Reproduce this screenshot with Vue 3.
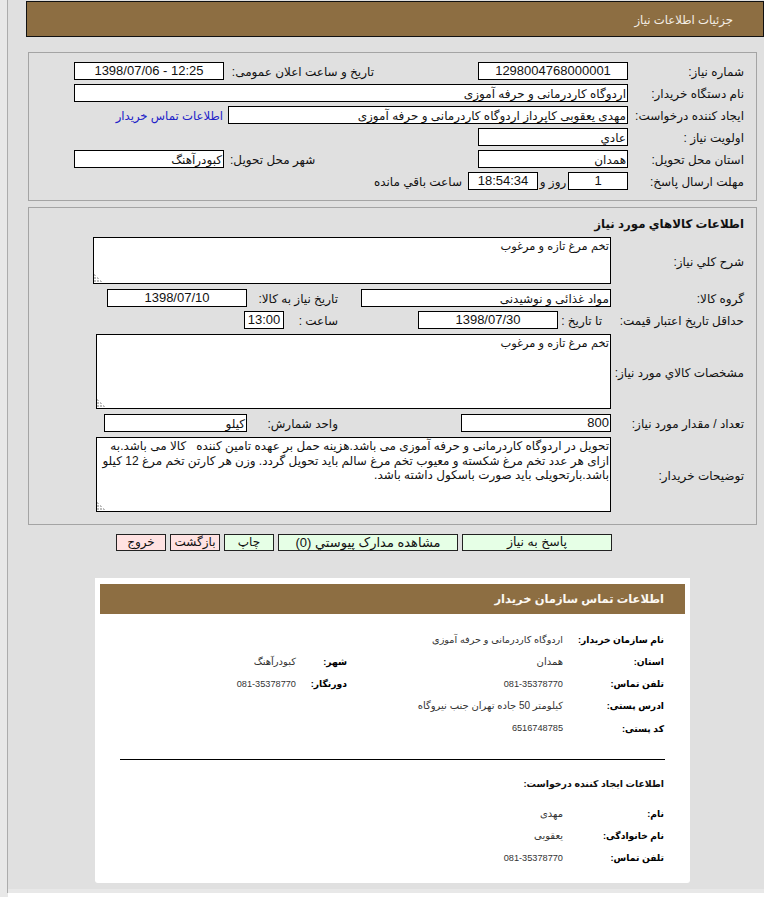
<script setup>
const contactRows = [
  { label: 'نام سازمان خریدار:', value: 'اردوگاه کاردرمانی و حرفه آموزی', small: true },
  { label: 'استان:', value: 'همدان', label2: 'شهر:', value2: 'کبودرآهنگ' },
  { label: 'تلفن تماس:', value: '081-35378770', num: true, label2: 'دورنگار:', value2: '081-35378770' },
  { label: 'ادرس پستی:', value: 'کیلومتر 50 جاده تهران جنب نیروگاه' },
  { label: 'کد پستی:', value: '6516748785', num: true },
]
const creatorRows = [
  { label: 'نام:', value: 'مهدی' },
  { label: 'نام خانوادگی:', value: 'یعقوبی' },
  { label: 'تلفن تماس:', value: '081-35378770', num: true },
]
</script>

<template>
  <div class="page" dir="rtl">
    <div class="frame">
      <header class="top-bar">جزئیات اطلاعات نیاز</header>

      <section class="panel panel-one">
        <div class="info-grid">
          <div class="lbl c-main">شماره نیاز:</div>
          <div class="field center num c-right">1298004768000001</div>
          <div class="lbl c-mid">تاریخ و ساعت اعلان عمومی:</div>
          <div class="field center num c-left">12:25 - 1398/07/06</div>

          <div class="lbl c-main">نام دستگاه خریدار:</div>
          <div class="field c-wide">اردوگاه کاردرمانی و حرفه آموزی</div>

          <div class="lbl c-main">ایجاد کننده درخواست:</div>
          <div class="field c-creator">مهدی یعقوبی کاپرداز اردوگاه کاردرمانی و حرفه آموزی</div>
          <a class="link c-left">اطلاعات تماس خریدار</a>

          <div class="lbl c-main">اولویت نیاز :</div>
          <div class="field c-right">عادي</div>

          <div class="lbl c-main">استان محل تحویل:</div>
          <div class="field c-right">همدان</div>
          <div class="lbl c-mid to-left">شهر محل تحویل:</div>
          <div class="field c-left">کبودرآهنگ</div>

          <div class="lbl c-main">مهلت ارسال پاسخ:</div>
          <div class="deadline c-wide">
            <div class="field center num w60">1</div>
            <span class="unit">روز و</span>
            <div class="field center num w70">18:54:34</div>
            <span class="remain">ساعت باقي مانده</span>
          </div>
        </div>
      </section>

      <section class="panel panel-two">
        <h2 class="goods-title">اطلاعات کالاهاي مورد نیاز</h2>

        <div class="row">
          <div class="lbl w133">شرح کلي نیاز:</div>
          <textarea class="area area-short" readonly>تخم مرغ تازه و مرغوب</textarea>
        </div>

        <div class="row gap-5">
          <div class="lbl w133">گروه کالا:</div>
          <div class="field w250">مواد غذائی و نوشیدنی</div>
          <div class="lbl w114 pad-23">تاریخ نیاز به کالا:</div>
          <div class="field center num w140">1398/07/10</div>
        </div>

        <div class="row gap-4">
          <div class="lbl w142">حداقل تاریخ اعتبار قیمت:</div>
          <div class="lbl w44">تا تاریخ :</div>
          <div class="field center num w140">1398/07/30</div>
          <div class="lbl w134 pad-80">ساعت :</div>
          <div class="field center num w40">13:00</div>
        </div>

        <div class="row gap-5">
          <div class="lbl w133">مشخصات کالاي مورد نیاز:</div>
          <textarea class="area area-tall area-small" readonly>تخم مرغ تازه و مرغوب</textarea>
        </div>

        <div class="row gap-5">
          <div class="lbl w133">تعداد / مقدار مورد نیاز:</div>
          <div class="field num w150">800</div>
          <div class="lbl w214 pad-123">واحد شمارش:</div>
          <div class="field w143">کیلو</div>
        </div>

        <div class="row gap-5">
          <div class="lbl w133">توضیحات خریدار:</div>
          <textarea class="area area-tall" readonly>تحویل در اردوگاه کاردرمانی و حرفه آموزی می باشد.هزینه حمل بر عهده تامین کننده   کالا می باشد.به ازای هر عدد تخم مرغ شکسته و معیوب تخم مرغ سالم باید تحویل گردد. وزن هر کارتن تخم مرغ 12 کیلو باشد.بارتحویلی باید صورت باسکول داشته باشد.</textarea>
        </div>
      </section>

      <div class="actions">
        <button class="btn green b150">پاسخ به نیاز</button>
        <button class="btn green b180">مشاهده مدارک پیوستي (0)</button>
        <button class="btn green b50">چاپ</button>
        <button class="btn pink b50">بازگشت</button>
        <button class="btn pink b50">خروج</button>
      </div>

      <article class="card">
        <div class="card-bar">اطلاعات تماس سازمان خریدار</div>
        <div class="contact">
          <div v-for="r in contactRows" :key="r.label" class="c-row">
            <div class="c-label">{{ r.label }}</div>
            <div class="c-value" :class="{ 'c-num': r.num, 'c-small': r.small }">{{ r.value }}</div>
            <div v-if="r.label2" class="c-label">{{ r.label2 }}</div>
            <div v-if="r.value2" class="c-value" :class="{ 'c-num': r.num }">{{ r.value2 }}</div>
          </div>
        </div>
        <hr class="divider" />
        <div class="sub-title">اطلاعات ایجاد کننده درخواست:</div>
        <div class="creator">
          <div v-for="r in creatorRows" :key="r.label" class="c-row">
            <div class="c-label">{{ r.label }}</div>
            <div class="c-value" :class="{ 'c-num': r.num }">{{ r.value }}</div>
          </div>
        </div>
      </article>
    </div>
    <div class="page-end"></div>
  </div>
</template>

<style>
html, body { margin: 0; background: #e8e8e8; }
</style>

<style scoped>
.page {
  width: 764px;
  height: 897px;
  overflow: hidden;
  box-sizing: border-box;
  padding-left: 7px;
  background: #e8e8e8;
  font-family: "Liberation Sans", "DejaVu Sans", sans-serif;
  font-size: 12px;
  color: #111;
}
.frame {
  height: 893px;
  box-sizing: border-box;
  border-left: 1px solid #acacac;
  background: linear-gradient(#e0e0e0 889px, #e8e8e8 889px);
  padding-top: 1px;
}
.page-end { height: 4px; margin-left: 1px; background: #fff; }
.top-bar {
  margin-left: 18px;
  height: 36px;
  box-sizing: border-box;
  border: 1px solid #111;
  background: #8d6e42;
  color: #f4efe6;
  line-height: 36px;
  padding-right: 30px;
  font-size: 11.7px;
}
.panel {
  box-sizing: border-box;
  width: 729px;
  margin-right: 7px;
  border: 1px solid #a4a4a4;
  background: #e0e0e0;
}
.panel-one { height: 149px; margin-top: 15px; padding: 9px 12px 0 45px; }
.panel-two { height: 318px; margin-top: 6px; padding: 0 12px 0 0; }

.info-grid {
  display: grid;
  grid-template-columns: 116px 150px 104px 146px 4px 150px;
  grid-auto-rows: 18px;
  row-gap: 4px;
}
.c-main { grid-column: 1; }
.c-right { grid-column: 2; }
.c-mid { grid-column: 4; }
.c-left { grid-column: 6; }
.c-wide { grid-column: 2 / 7; }
.c-creator { grid-column: 2 / 5; }

.lbl {
  white-space: nowrap;
  height: 18px;
  line-height: 20px;
  align-self: center;
  box-sizing: border-box;
}
.to-left { text-align: left; padding-left: 2px; }
.field {
  height: 18px;
  box-sizing: border-box;
  border: 1px solid #000;
  background: #fff;
  line-height: 18px;
  padding: 0 1px;
  white-space: nowrap;
  overflow: hidden;
}
.center { text-align: center; }
.num { font-size: 13px; line-height: 16px; }
.link { color: #2222c8; line-height: 20px; white-space: nowrap; padding-right: 1px; font-size: 11.7px; }

.deadline { display: flex; align-items: center; }
.unit { width: 30px; height: 18px; line-height: 20px; text-align: center; white-space: nowrap; }
.remain { margin-right: 6px; height: 18px; line-height: 20px; white-space: nowrap; }

.goods-title {
  margin: 0;
  height: 29px;
  line-height: 32px;
  font-size: 11.8px;
  font-weight: bold;
}
.row { display: flex; align-items: center; }
.gap-4 { margin-top: 4px; }
.gap-5 { margin-top: 5px; }
.w40 { width: 40px; flex: none; }
.w44 { width: 44px; flex: none; }
.w60 { width: 60px; flex: none; }
.w70 { width: 70px; flex: none; }
.w114 { width: 114px; flex: none; }
.w133 { width: 133px; flex: none; }
.w134 { width: 134px; flex: none; }
.w140 { width: 140px; flex: none; }
.w142 { width: 142px; flex: none; }
.w143 { width: 143px; flex: none; }
.w150 { width: 150px; flex: none; }
.w214 { width: 214px; flex: none; }
.w250 { width: 250px; flex: none; }
.pad-23 { padding-right: 23px; }
.pad-80 { padding-right: 80px; }
.pad-123 { padding-right: 123px; }

.area {
  display: block;
  box-sizing: border-box;
  margin: 0;
  border: 1px solid #000;
  background: #fff;
  color: #111;
  padding: 1px;
  font-family: inherit;
  font-size: 12px;
  line-height: 14.5px;
  outline: none;
}
.area::-webkit-resizer {
  background-color: #fff;
  background-image:
    linear-gradient(to top right, transparent 7px, #fff 7px),
    radial-gradient(circle at 1px 1px, #bdbdbd 1px, transparent 1px);
  background-size: 100% 100%, 3px 3px;
}
.area-short { width: 518px; height: 47px; font-size: 11.4px; }
.area-tall { width: 515px; height: 75px; }
.area-small { font-size: 11.4px; }

.actions {
  display: flex;
  gap: 4px;
  margin: 9px 152px 0 0;
}
.btn {
  box-sizing: border-box;
  height: 17px;
  padding: 0;
  border: 1px solid #222;
  border-radius: 0;
  font-family: inherit;
  font-size: 12px;
  line-height: 15px;
  color: #111;
}
.green { background: #e6ffe6; }
.pink { background: #ffe2e2; }
.b50 { width: 50px; }
.b150 { width: 150px; font-size: 12.5px; }
.b180 { width: 180px; font-size: 13px; }

.card {
  box-sizing: border-box;
  width: 595px;
  height: 305px;
  margin: 27px 74px 0 0;
  padding: 6px 5px 0;
  background: #fff;
  border-radius: 0 0 3px 3px;
}
.card-bar {
  height: 30px;
  line-height: 30px;
  background: #8d6e42;
  color: #fbf8f2;
  font-weight: bold;
  font-size: 11.5px;
  padding-right: 21px;
}
.contact { margin-top: 14px; padding-right: 21px; }
.c-row {
  display: flex;
  height: 22.25px;
  align-items: center;
  white-space: nowrap;
}
.c-label { font-weight: bold; font-size: 9.2px; color: #000; }
.c-value { font-size: 10px; color: #333; }
.c-small { font-size: 9.7px; }
.c-num { font-size: 9.2px; }
.c-row .c-label:nth-child(1) { width: 101px; flex: none; }
.c-row .c-value:nth-child(2) { width: 216px; flex: none; }
.c-row .c-label:nth-child(3) { width: 51px; flex: none; }
.divider {
  margin: 20px 20px 0 25px;
  width: 545px;
  height: 1px;
  border: 0;
  background: #000;
  box-sizing: border-box;
}
.sub-title {
  margin: 14px 21px 0 0;
  height: 20px;
  line-height: 20px;
  font-weight: bold;
  font-size: 9.4px;
}
.creator { margin-top: 8px; padding-right: 21px; }
</style>
